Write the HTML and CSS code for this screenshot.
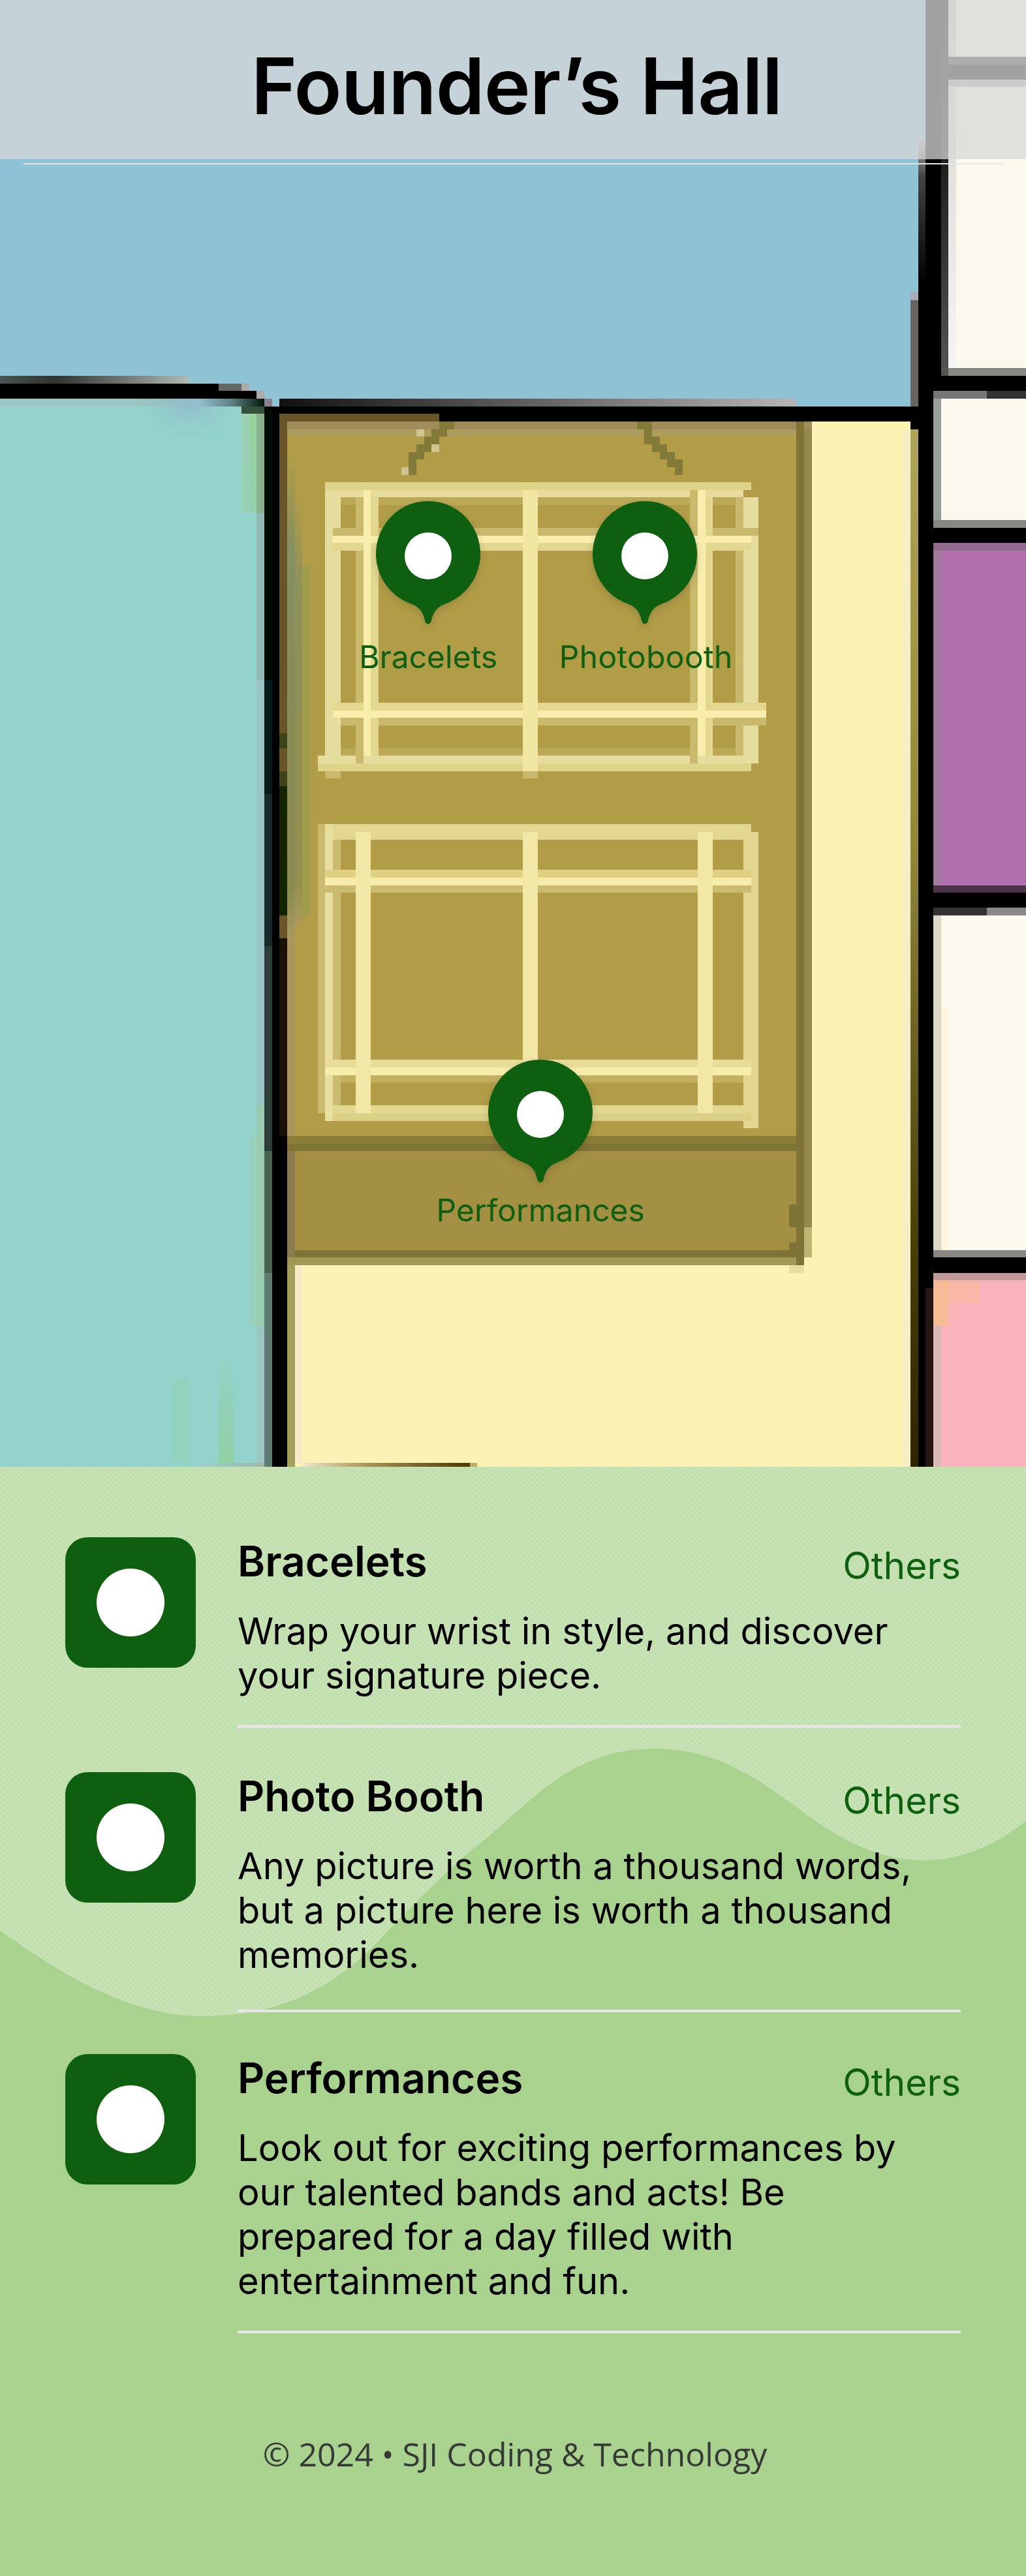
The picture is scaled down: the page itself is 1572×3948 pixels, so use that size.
FILE: index.html
```html
<!DOCTYPE html>
<html lang="en">
<head>
<meta charset="utf-8">
<title>Founder’s Hall</title>
<link rel="stylesheet" href="styles.css">
</head>
<body>
<section class="map">
  <svg class="floor" width="1572" height="2248" viewBox="0 0 1572 2248" shape-rendering="crispEdges">
    <defs>
      <linearGradient id="fadeTop"><stop offset="0" stop-color="#111"/><stop offset="1" stop-color="#b5b5b3"/></linearGradient>
      <linearGradient id="fadeLeft"><stop offset="0" stop-color="#4c5552"/><stop offset=".3" stop-color="#2e342e"/><stop offset="1" stop-color="#b0b8b4"/></linearGradient>
      <linearGradient id="fadeUnder"><stop offset="0" stop-color="#9cc4c0"/><stop offset=".5" stop-color="#8fbfcb"/><stop offset=".75" stop-color="#5d7f82"/><stop offset="1" stop-color="#001808"/></linearGradient>
      <linearGradient id="strip"><stop offset="0" stop-color="#f0e6c8"/><stop offset=".4" stop-color="#a09450"/><stop offset="1" stop-color="#4a3a00"/></linearGradient>
      <linearGradient id="stripLeft"><stop offset="0" stop-color="#9bd0d0"/><stop offset="1" stop-color="#9cb8a8"/></linearGradient>
      <linearGradient id="wallIn" x2="0" y2="1"><stop offset="0" stop-color="#aaa"/><stop offset=".25" stop-color="#444"/><stop offset="1" stop-color="#000"/></linearGradient>
      <linearGradient id="wallOut" x2="0" y2="1"><stop offset="0" stop-color="#000"/><stop offset=".3" stop-color="#111"/><stop offset="1" stop-color="#555"/></linearGradient>
      <linearGradient id="edge" x2="0" y2="1"><stop offset="0" stop-color="#d2d0cd"/><stop offset="1" stop-color="#f4f4f2"/></linearGradient>
      <linearGradient id="olive" x2="0" y2="1"><stop offset="0" stop-color="#b0a45a"/><stop offset=".4" stop-color="#94863a"/><stop offset=".6" stop-color="#6a5f22"/><stop offset=".8" stop-color="#463c04"/><stop offset="1" stop-color="#2f2303"/></linearGradient>
      <linearGradient id="fringe" x2="0" y2="1"><stop offset="0" stop-color="#98d39a"/><stop offset="1" stop-color="#97d1b4"/></linearGradient>
      <linearGradient id="streak" x2="0" y2="1"><stop offset="0" stop-color="#94d2cc"/><stop offset="1" stop-color="#90d0a4"/></linearGradient>
      <linearGradient id="shade" x2="0" y2="1"><stop offset="0" stop-color="#868f58" stop-opacity="0"/><stop offset=".2" stop-color="#858f60"/><stop offset=".9" stop-color="#8a8a4f"/><stop offset="1" stop-color="#a89a60"/></linearGradient>
      <radialGradient id="haze"><stop offset="0" stop-color="#90bfcb"/><stop offset="1" stop-color="#94d2cc" stop-opacity="0"/></radialGradient>
    </defs>
    <rect width="1572" height="2248" fill="#8ec2d5"/>
    <g transform="translate(-2.6 -6.3) scale(11.648)">
      <!-- west room -->
      <path fill="#94d2cc" d="M0 53H36V195H0z"/>
      <path fill="#9ac6c4" d="M0 53H24V54H0z"/>
      <ellipse cx="25" cy="54" rx="8" ry="5" fill="url(#haze)"/>
      <path fill="url(#fringe)" d="M33 55H34V68H33z"/>
      <path fill="#9ad2b8" d="M32 55H33V68H32z"/>
      <path fill="#88b08c" d="M34 55H35V68H34z"/>
      <path fill="#92b9b3" d="M34 68H35V90H34z"/>
      <path fill="#9ac4c4" d="M34 90H35V146H34z"/>
      <path fill="#98cbb0" d="M34 146H35V175H34z"/>
      <path fill="#98cfbc" d="M33 150H34V175H33z"/>
      <path fill="#9cc6c4" d="M34 175H35V193H34z"/>
      <path fill="url(#streak)" d="M29 178H31V193H29z"/>
      <path fill="#94d2c0" d="M23 182H25V193H23z"/>
      <path fill="url(#stripLeft)" d="M26 193H35V194H26z"/>
      <path fill="url(#fadeLeft)" d="M0 50H25V51H0z"/>
      <path fill="#8ec2d5" d="M17 49H35V50H17z"/>
      <path d="M0 51H29V52H34V53H35V54H36V55H34V54H29V53H0z"/>
      <path fill="url(#fadeUnder)" d="M18 53H35V54H18z"/>
      <path fill="#35503c" d="M32 54H35V55H32z"/>
      <path fill="#666" d="M29 51H32V52H29z"/>
      <path fill="#aaa" d="M32 51H33V52H32zM34 52H35V53H34z"/>
      <path fill="#8a8090" d="M35 53H36V54H35z"/>
      <!-- yellow corridor -->
      <path fill="#fdf2b3" d="M38 56H121V195H38z"/>
      <path fill="#f5edc4" d="M119 57H120V194H119z"/>
      <path fill="#f5ecc6" d="M39 167H40V193H39z"/>
      <!-- hall floor -->
      <path fill="#b19d48" d="M37 56H105V150H37z"/>
      <path fill="#a08b5a" d="M38 56H107V57H38z"/>
      <path fill="#ad9c5c" d="M38 57H105V58H38z"/>
      <path fill="url(#shade)" d="M38 60H39V124H38z"/>
      <path fill="url(#shade)" opacity=".8" d="M39 66H40V122H39z"/>
      <path fill="#9e9c4c" opacity=".8" d="M40 75H41V121H40z"/>
      <path fill="#a8965c" d="M38 124H39V151H38z"/>
      <path fill="#a39042" d="M38 152H105V165H38z"/>
      <path fill="#8b7e38" d="M38 150H105V151H38z"/>
      <path fill="#7f7435" d="M38 151H105V152H38zM38 165H106V166H38zM105 56H106V167H105zM104 159H105V162H104zM104 164H105V165H104z"/>
      <path fill="#94874b" d="M106 57H107V162H106z"/>
      <path fill="#bfb573" d="M106 162H107V166H106z"/>
      <path fill="#a19756" d="M38 166H105V167H38z"/>
      <path fill="#e6dd9e" d="M104 167H106V168H104z"/>
      <path fill="#8a7c50" d="M38 152H39V166H38z"/>
      <!-- ceiling marks -->
      <path fill="#837938" d="M58 56H60V57H59V58H58V59H57V60H56V61H55V63H54V60H55V59H56V58H57V57H58zM84 56H86V58H87V59H88V60H89V61H90V63H89V62H88V61H87V60H86V59H85V57H84z"/>
      <path fill="#cec58c" d="M55 57H56V58H55zM57 59H58V60H57zM53 62H54V63H53z"/>
      <!-- upper court -->
      <g fill="#dfd38a">
        <path fill="#bba958" d="M45 66H98V67H45zM45 99H98V100H45z"/>
        <path d="M43 64H99V65H43z"/>
        <path fill="#e6dc9e" d="M43 65H98V66H43zM43 66H45V102H43zM98 66H100V101H98zM42 100H98V101H42z"/>
        <path d="M42 101H99V102H42z"/>
        <path fill="#c9b96c" d="M47 66H48V101H47zM91 65H92V101H91zM97 66H98V100H97zM44 70H100V71H44zM45 95H101V96H45zM43 102H45V103H43zM69 102H71V103H69z"/>
        <path fill="#e3d68e" d="M44 72H99V73H44zM44 93H101V94H44zM49 66H50V100H49zM93 66H94V100H93z"/>
        <path fill="#f8edad" d="M44 71H99V72H44zM44 94H101V95H44zM48 65H49V100H48zM92 65H93V100H92z"/>
        <path fill="#f1e6a2" d="M69 65H71V102H69z"/>
      </g>
      <!-- lower court -->
      <g fill="#e2d791">
        <path d="M43 109H99V111H43zM98 110H100V149H98zM43 146H99V147H43z"/>
        <path fill="#dcd087" d="M43 147H99V148H43z"/>
        <path fill="#e8df9f" d="M43 109H44V148H43z"/>
        <path fill="#cbbb70" d="M42 109H43V147H42zM44 111H45V146H44zM43 117H99V118H43z"/>
        <path fill="#c2af5f" d="M45 142H98V143H45z"/>
        <path fill="#e0d084" d="M43 115H99V116H43z"/>
        <path fill="#e8dc98" d="M43 140H99V141H43z"/>
        <path fill="#f7ecaa" d="M43 116H99V117H43zM43 141H99V142H43z"/>
        <path fill="#f2e7a5" d="M47 110H49V147H47zM92 110H94V147H92zM69 110H71V142H69z"/>
      </g>
      <!-- walls -->
      <path fill="url(#fadeTop)" d="M37 53H105V54H37z"/>
      <path d="M36 54H123V56H36z"/>
      <path fill="#6a542a" d="M37 55H58V56H37zM37 56H38V97H37zM37 99H38V102H37z"/>
      <path fill="#3f4418" d="M37 97H38V99H37zM37 102H38V104H37z"/>
      <path fill="#122500" d="M37 104H38V121H37z"/>
      <path fill="#6a542a" d="M37 121H38V124H37z"/>
      <path fill="#1a1204" d="M37 124H38V150H37z"/>
      <path d="M37 150H38V194H37zM36 54H37V194H36z"/>
      <path fill="#020c04" d="M35 54H36V90H35z"/>
      <path fill="#081a18" d="M35 90H36V105H35z"/>
      <path fill="#172a2a" d="M35 105H36V125H35z"/>
      <path fill="#2c3c36" d="M35 125H36V152H35z"/>
      <path fill="#4a6350" d="M35 152H36V168H35z"/>
      <path fill="#5f7c70" d="M35 168H36V194H35z"/>
      <path fill="#a2a05c" d="M38 167H39V194H38z"/>
      <path fill="url(#strip)" d="M40 193H62V194H40z"/>
      <path fill="#b9ad68" d="M62 193H63V194H62z"/>
      <!-- east rooms -->
      <path fill="#fbf9ee" d="M124 0H136V194H124z"/>
      <path fill="#b16fae" d="M123 72H136V117H123z"/>
      <path fill="#a07b9e" d="M123 73H124V117H123z"/>
      <path fill="#8f6c8d" d="M123 72H136V73H123z"/>
      <path fill="#f7b3b9" d="M123 168H136V194H123z"/>
      <path fill="#c19a9c" d="M123 168H136V169H123z"/>
      <path fill="#f4bb94" d="M123 169H125V175H123z"/>
      <path fill="#f7b6a6" d="M125 169H129V172H125z"/>
      <path fill="#dcb8b4" d="M123 175H124V194H123z"/>
      <path fill="#dcd8c8" d="M123 121H124V165H123z"/>
      <path fill="#fdf6dc" d="M124 133H125V165H124z"/>
      <path fill="#9a9e98" d="M123 52H124V69H123z"/>
      <path fill="url(#edge)" d="M125 0H126V49H125z"/>
      <path fill="#888882" d="M124 49H136V50H124zM123 69H136V70H123zM123 165H136V166H123z"/>
      <path fill="#333" d="M125 8H136V9H125z"/>
      <path fill="#aaa" d="M125 11H136V12H125z"/>
      <path fill="#4b3448" d="M123 117H136V118H123z"/>
      <path fill="#777" d="M123 52H130V53H123z"/>
      <path fill="#333" d="M130 52H136V53H130zM123 120H130V121H123z"/>
      <path fill="#888" d="M130 120H136V121H130z"/>
      <path d="M122 0H124V52H123V54H122zM125 9H136V11H125zM123 50H136V52H123zM123 70H136V72H123zM123 118H136V120H123zM123 166H136V168H123zM121 38H123V194H121zM120 54H121V57H120z"/>
      <path fill="url(#wallIn)" d="M121 19H122V38H121z"/>
      <path fill="#666360" d="M120 40H121V54H120z"/>
      <path fill="#aab" d="M120 39H121V40H120z"/>
      <path fill="url(#wallOut)" d="M124 0H125V50H124z"/>
      <path fill="url(#olive)" d="M120 57H121V194H120z"/>
      <path fill="#241613" d="M122 170H123V194H122z"/>
    </g>
  </svg>
  <header class="header"><h1 class="title">Founder’s Hall</h1></header>
  <div class="header-rule"></div>
  <div class="pin pin-bracelets">
    <svg class="pin-icon" width="200" height="210" viewBox="-100 -90 200 210"><path class="pin-shape" d="M-26 77.5A80 81 0 1 1 26 77.5C13 82 7 92 5 103Q4 108 0 108Q-4 108 -5 103C-7 92 -13 82 -26 77.5z"/><circle cy="4" r="36" fill="#fff"/></svg>
    <span class="pin-label">Bracelets</span>
  </div>
  <div class="pin pin-photobooth">
    <svg class="pin-icon" width="200" height="210" viewBox="-100 -90 200 210"><path class="pin-shape" d="M-26 77.5A80 81 0 1 1 26 77.5C13 82 7 92 5 103Q4 108 0 108Q-4 108 -5 103C-7 92 -13 82 -26 77.5z"/><circle cy="4" r="36" fill="#fff"/></svg>
    <span class="pin-label pin-label-wide">Photobooth</span>
  </div>
  <div class="pin pin-performances">
    <svg class="pin-icon" width="200" height="210" viewBox="-100 -90 200 210"><path class="pin-shape" d="M-26 77.5A80 81 0 1 1 26 77.5C13 82 7 92 5 103Q4 108 0 108Q-4 108 -5 103C-7 92 -13 82 -26 77.5z"/><circle cy="4" r="36" fill="#fff"/></svg>
    <span class="pin-label">Performances</span>
  </div>
</section>
<main class="panel">
  <svg class="wave" width="1572" height="1700" viewBox="0 2248 1572 1700">
    <defs><pattern id="dots" width="8.6" height="8.6" patternUnits="userSpaceOnUse"><path fill="#bfdca9" d="M0 0h4.3v4.3h-4.3zM4.3 4.3h4.3v4.3h-4.3z"/></pattern></defs>
    <rect y="2248" width="1572" height="900" fill="#c7e3b6"/>
    <rect y="2248" width="1572" height="900" fill="url(#dots)" opacity=".7"/>
    <path fill="#a8d28d" d="M0 2959C60 3000 180 3090 309 3090C440 3090 520 3040 591 2963C640 2912 690 2860 742 2820C820 2755 880 2680 1003 2680C1090 2680 1150 2718 1218 2768C1280 2815 1340 2851 1414 2851C1475 2851 1530 2825 1572 2791V3948H0z"/>
  </svg>
  <ul class="list">
    <li class="item item-two">
      <div class="badge"></div>
      <div class="content">
        <div class="head"><h2 class="name">Bracelets</h2><span class="tag">Others</span></div>
        <p class="text">Wrap your wrist in style, and discover<br>your signature piece.</p>
      </div>
    </li>
    <li class="item item-three">
      <div class="badge"></div>
      <div class="content">
        <div class="head"><h2 class="name">Photo Booth</h2><span class="tag">Others</span></div>
        <p class="text">Any picture is worth a thousand words,<br>but a picture here is worth a thousand<br>memories.</p>
      </div>
    </li>
    <li class="item item-four">
      <div class="badge"></div>
      <div class="content">
        <div class="head"><h2 class="name">Performances</h2><span class="tag">Others</span></div>
        <p class="text">Look out for exciting performances by<br>our talented bands and acts! Be<br>prepared for a day filled with<br>entertainment and fun.</p>
      </div>
    </li>
  </ul>
  <footer class="footer">© 2024 • SJI Coding &amp; Technology</footer>
</main>
</body>
</html>
```
FILE: styles.css
```css
* { box-sizing: border-box; margin: 0; padding: 0; }
body { width: 1572px; background: #a8d28d; font-family: Inter, "Liberation Sans", sans-serif; font-weight: 370; color: #000; }
.map { position: relative; height: 2248px; overflow: hidden; }
.floor { position: absolute; left: 0; top: 0; }
.header { position: relative; height: 244px; padding-top: 59px; background: rgba(215, 215, 215, .75); text-align: center; }
.title { padding-left: 11px; font-size: 120px; line-height: 145px; font-weight: 600; letter-spacing: -.9px; white-space: nowrap; }
.header-rule { position: relative; height: 2px; margin: 6px 36px 0; background: #e6e6e8; }
.pin { position: absolute; width: 400px; display: flex; flex-direction: column; align-items: center; }
.pin-bracelets { left: 456px; top: 758px; }
.pin-photobooth { left: 788px; top: 758px; }
.pin-performances { left: 628px; top: 1614px; }
.pin-shape { fill: #0e6010; filter: drop-shadow(0 4px 6px rgba(0, 0, 0, .15)); }
.pin-label { margin-top: 10px; font-size: 48px; line-height: 58px; color: #0e6010; }
.pin-label-wide { padding-left: 3px; letter-spacing: .3px; }
.pin-performances .pin-label { margin-top: 2px; }
.panel { position: relative; height: 1700px; }
.wave { position: absolute; left: 0; top: 0; }
.list { position: relative; padding: 108px 100px 0; list-style: none; }
.item { display: flex; gap: 64px; align-items: flex-start; }
.item-two { height: 360px; }
.item-three { height: 432px; }
.item-four { height: 428px; }
.badge { display: flex; width: 200px; height: 200px; border-radius: 34px; background: #0e6010; align-items: center; justify-content: center; }
.badge::after { content: ""; width: 104px; height: 104px; border-radius: 50%; background: #fff; }
.content { flex: 1; border-bottom: 4px solid #e8e6e8; }
.item-two .content { height: 292px; }
.item-three .content { height: 368px; }
.item-four .content { height: 428px; }
.head { display: flex; justify-content: space-between; height: 110px; }
.name { font-size: 64px; line-height: 73px; font-weight: 600; }
.tag { margin-top: 9px; font-size: 57px; line-height: 69px; color: #0e6010; }
.text { font-size: 56px; line-height: 68px; white-space: nowrap; }
.footer { position: relative; margin-top: 149px; padding-left: 6px; text-align: center; font: 400 50px/72px "Open Sans", sans-serif; color: #363a36; }
```
